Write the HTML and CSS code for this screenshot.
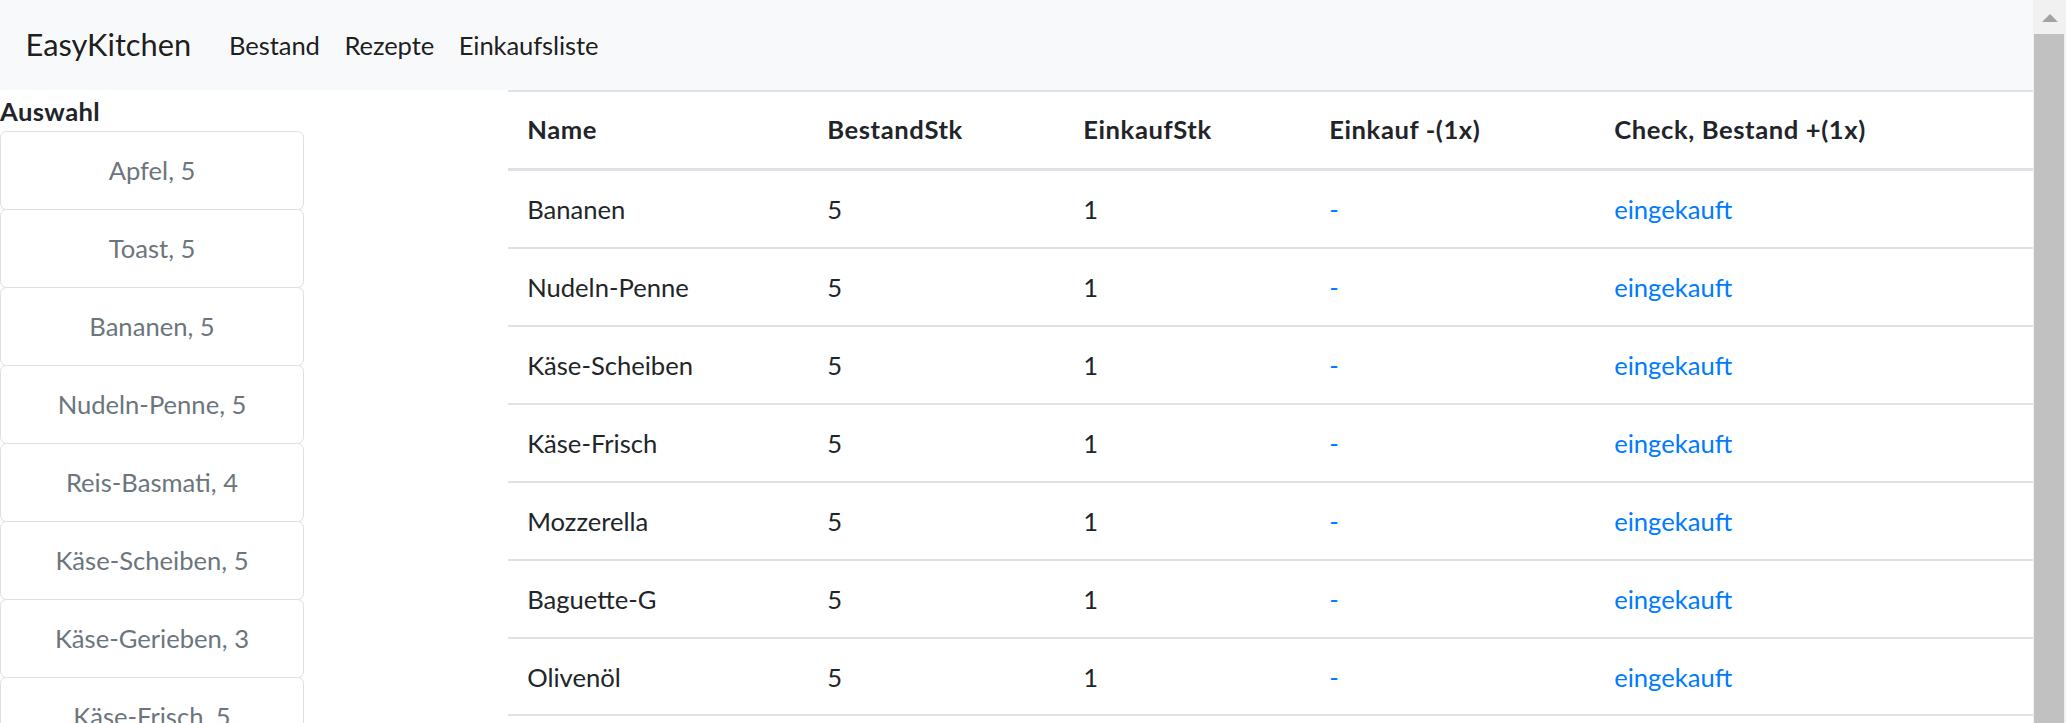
FILE: index.html
```html
<!DOCTYPE html>
<html lang="de">
<head>
<meta charset="utf-8">
<title>EasyKitchen</title>
<link rel="stylesheet" href="styles.css">
</head>
<body>
<div class="page">
  <div class="main">
    <nav class="navbar">
      <a class="brand" href="#">EasyKitchen</a>
      <a class="nav-link" href="#">Bestand</a>
      <a class="nav-link" href="#">Rezepte</a>
      <a class="nav-link" href="#">Einkaufsliste</a>
    </nav>
    <div class="content">
      <aside class="side">
        <div class="side-title">Auswahl</div>
        <div class="pick-list">
          <button class="pick">Apfel, 5</button>
          <button class="pick">Toast, 5</button>
          <button class="pick">Bananen, 5</button>
          <button class="pick">Nudeln-Penne, 5</button>
          <button class="pick">Reis-Basmati, 4</button>
          <button class="pick">Käse-Scheiben, 5</button>
          <button class="pick">Käse-Gerieben, 3</button>
          <button class="pick">Käse-Frisch, 5</button>
          <button class="pick">Mozzerella, 5</button>
        </div>
      </aside>
      <section class="table-col">
        <table class="table">
          <colgroup>
            <col class="c1"><col class="c2"><col class="c3"><col class="c4"><col>
          </colgroup>
          <thead>
            <tr><th>Name</th><th>BestandStk</th><th>EinkaufStk</th><th>Einkauf -(1x)</th><th>Check, Bestand +(1x)</th></tr>
          </thead>
          <tbody>
            <tr><td>Bananen</td><td>5</td><td>1</td><td><a href="#">-</a></td><td><a href="#">eingekauft</a></td></tr>
            <tr><td>Nudeln-Penne</td><td>5</td><td>1</td><td><a href="#">-</a></td><td><a href="#">eingekauft</a></td></tr>
            <tr><td>Käse-Scheiben</td><td>5</td><td>1</td><td><a href="#">-</a></td><td><a href="#">eingekauft</a></td></tr>
            <tr><td>Käse-Frisch</td><td>5</td><td>1</td><td><a href="#">-</a></td><td><a href="#">eingekauft</a></td></tr>
            <tr><td>Mozzerella</td><td>5</td><td>1</td><td><a href="#">-</a></td><td><a href="#">eingekauft</a></td></tr>
            <tr><td>Baguette-G</td><td>5</td><td>1</td><td><a href="#">-</a></td><td><a href="#">eingekauft</a></td></tr>
            <tr><td>Olivenöl</td><td>5</td><td>1</td><td><a href="#">-</a></td><td><a href="#">eingekauft</a></td></tr>
            <tr><td>Apfel</td><td>5</td><td>1</td><td><a href="#">-</a></td><td><a href="#">eingekauft</a></td></tr>
          </tbody>
        </table>
      </section>
    </div>
  </div>
  <div class="scrollbar">
    <div class="sb-btn"><span class="sb-arrow"></span></div>
    <div class="sb-thumb"></div>
  </div>
</div>
</body>
</html>
```

FILE: styles.css
```css
html, body {
  margin: 0;
  padding: 0;
  height: 100%;
}
body {
  font-family: Lato, "Noto Sans", sans-serif;
  font-size: 25.6px;
  line-height: 38.4px;
  color: #212529;
  background: #fff;
}
.page {
  display: flex;
  height: 723px;
  overflow: hidden;
}
.main {
  flex: 1;
  min-width: 0;
  overflow: hidden;
}
.navbar {
  display: flex;
  align-items: center;
  background: #f8f9fa;
  padding: 12.8px 25.6px;
  height: 89.6px;
  box-sizing: border-box;
}
.brand {
  font-size: 30.8px;
  line-height: 48px;
  padding: 8px 0;
  margin-right: 25.6px;
  color: rgba(0,0,0,.9);
  text-decoration: none;
}
.nav-link {
  padding: 12.8px 12.3px;
  color: rgba(0,0,0,.9);
  text-decoration: none;
  letter-spacing: -0.1px;
}
.nav-link:first-of-type {
  padding-left: 11px;
}
.content {
  display: flex;
  align-items: flex-start;
}
.side {
  width: 508px;
  flex: none;
}
.side-title {
  font-weight: 700;
  margin-top: 2px;
  line-height: 38.4px;
  letter-spacing: 0.4px;
}
.pick-list {
  display: flex;
  flex-direction: column;
  width: 304px;
  margin-top: 0.6px;
}
.pick {
  display: block;
  box-sizing: border-box;
  height: 79px;
  margin-bottom: -1px;
  padding: 1px 12px 0;
  font: inherit;
  line-height: 38.4px;
  color: #6c757d;
  background: #fff;
  border: 1px solid #dfdfdf;
  border-radius: 6.4px;
  text-align: center;
}
.table-col {
  flex: 1;
  min-width: 0;
}
.table {
  width: 100%;
  table-layout: fixed;
  border-collapse: separate;
  border-spacing: 0;
}
.c1 { width: 300px; }
.c2 { width: 256px; }
.c3 { width: 246px; }
.c4 { width: 285px; }
.table th {
  text-align: left;
  font-weight: 700;
  padding: 18.8px 19.2px;
  border-top: 2px solid #dee2e6;
  border-bottom: 3px solid #dee2e6;
  white-space: nowrap;
  letter-spacing: 0.6px;
}
.table td {
  padding: 19.2px 19.2px 18.4px;
  border-bottom: 2px solid #dee2e6;
  white-space: nowrap;
}
.table a {
  color: #007bff;
  text-decoration: none;
}
.scrollbar {
  width: 33px;
  flex: none;
  background: #f1f1f1;
  display: flex;
  flex-direction: column;
}
.sb-btn {
  height: 34px;
  flex: none;
  display: flex;
  justify-content: center;
  padding-top: 14px;
  box-sizing: border-box;
}
.sb-arrow {
  width: 0;
  height: 0;
  border-left: 8px solid transparent;
  border-right: 8px solid transparent;
  border-bottom: 8px solid #a3a3a3;
}
.sb-thumb {
  flex: 1;
  margin: 0 2px 0 1px;
  background: #c1c1c1;
}
```
